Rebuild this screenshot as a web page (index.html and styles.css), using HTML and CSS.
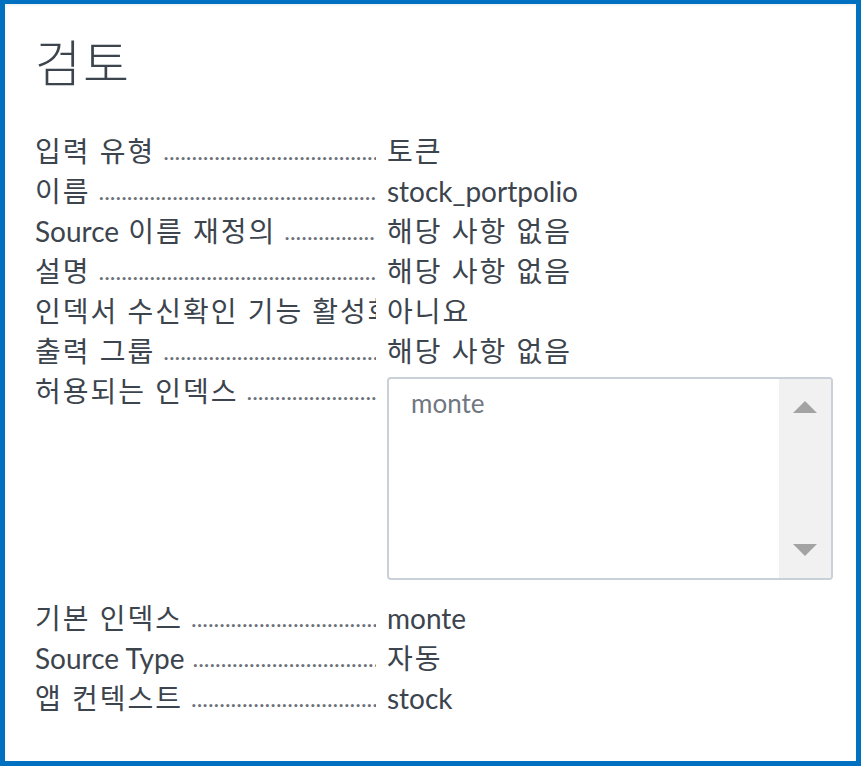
FILE: index.html
```html
<!DOCTYPE html>
<html lang="ko">
<head>
<meta charset="utf-8">
<title>검토</title>
<link rel="stylesheet" href="styles.css">
</head>
<body>
<div class="panel">
  <h1 class="title">검토</h1>
  <dl class="details">
    <div class="row">
      <dt class="label"><span class="label-text">입력 유형</span><span class="leader">..................................................................</span></dt>
      <dd class="value">토큰</dd>
    </div>
    <div class="row">
      <dt class="label"><span class="label-text">이름</span><span class="leader">..................................................................</span></dt>
      <dd class="value"><span class="latin">stock_portpolio</span></dd>
    </div>
    <div class="row">
      <dt class="label"><span class="label-text"><span class="latin">Source</span> 이름 재정의</span><span class="leader">..................................................................</span></dt>
      <dd class="value">해당 사항 없음</dd>
    </div>
    <div class="row">
      <dt class="label"><span class="label-text">설명</span><span class="leader">..................................................................</span></dt>
      <dd class="value">해당 사항 없음</dd>
    </div>
    <div class="row">
      <dt class="label"><span class="label-text">인덱서 수신확인 기능 활성화</span><span class="leader">..................................................................</span></dt>
      <dd class="value">아니요</dd>
    </div>
    <div class="row">
      <dt class="label"><span class="label-text">출력 그룹</span><span class="leader">..................................................................</span></dt>
      <dd class="value">해당 사항 없음</dd>
    </div>
    <div class="row row-list">
      <dt class="label"><span class="label-text">허용되는 인덱스</span><span class="leader">..................................................................</span></dt>
      <dd class="value">
        <div class="listbox">
          <div class="list-items">
            <div class="list-item latin">monte</div>
          </div>
          <div class="scrollbar">
            <span class="arrow arrow-up"></span>
            <span class="arrow arrow-down"></span>
          </div>
        </div>
      </dd>
    </div>
    <div class="row">
      <dt class="label"><span class="label-text">기본 인덱스</span><span class="leader">..................................................................</span></dt>
      <dd class="value"><span class="latin">monte</span></dd>
    </div>
    <div class="row">
      <dt class="label"><span class="label-text"><span class="latin">Source Type</span></span><span class="leader">..................................................................</span></dt>
      <dd class="value">자동</dd>
    </div>
    <div class="row">
      <dt class="label"><span class="label-text">앱 컨텍스트</span><span class="leader">..................................................................</span></dt>
      <dd class="value"><span class="latin">stock</span></dd>
    </div>
  </dl>
</div>
</body>
</html>
```

FILE: styles.css
```css
html, body {
  margin: 0;
  padding: 0;
  background: #ffffff;
}

.panel {
  box-sizing: border-box;
  width: 861px;
  height: 766px;
  border-style: solid;
  border-color: #0070c0;
  border-width: 4px 5px 5px 5px;
  box-shadow: inset 0 2px 2px rgba(0, 60, 100, 0.06);
  padding: 24px 0 0 30px;
  font-family: "Lato", "Noto Sans CJK KR", sans-serif;
  color: #3c444d;
}

.title {
  margin: 0;
  font-family: "Noto Sans CJK KR", sans-serif;
  font-weight: 300;
  font-size: 50px;
  line-height: 64px;
  color: #3c444d;
  letter-spacing: 2px;
}

.details {
  margin: 39px 0 0 0;
  font-size: 28px;
}

.row {
  display: flex;
  align-items: flex-start;
  height: 40px;
  line-height: 40px;
}

.row-list {
  height: 227px;
}

.label {
  display: flex;
  width: 341px;
  flex: none;
  overflow: hidden;
  white-space: nowrap;
  margin: 0;
}

.label-text {
  flex: none;
  letter-spacing: 2px;
}

.latin {
  letter-spacing: 0;
}

.leader {
  flex: 1 1 0;
  min-width: 0;
  overflow: hidden;
  padding-left: 8px;
  font-size: 24px;
  color: #6b7079;
}

.value {
  margin: 0 0 0 11px;
  white-space: nowrap;
  letter-spacing: 2px;
}

.listbox {
  box-sizing: border-box;
  display: flex;
  width: 446px;
  height: 203px;
  margin-top: 6px;
  border: 2px solid #c9d0d8;
  border-radius: 4px;
  background: #ffffff;
  overflow: hidden;
}

.list-items {
  flex: 1;
  padding: 4px 0 0 22px;
}

.list-item {
  color: #6f7780;
  font-size: 26px;
  line-height: 40px;
}

.scrollbar {
  width: 52px;
  flex: none;
  background: #f1f1f1;
  display: flex;
  flex-direction: column;
  justify-content: space-between;
  align-items: center;
  padding: 22px 0 22px 0;
}

.arrow {
  width: 0;
  height: 0;
  border-left: 12px solid transparent;
  border-right: 12px solid transparent;
}

.arrow-up {
  border-bottom: 12px solid #a3a3a3;
}

.arrow-down {
  border-top: 12px solid #a3a3a3;
}
```
